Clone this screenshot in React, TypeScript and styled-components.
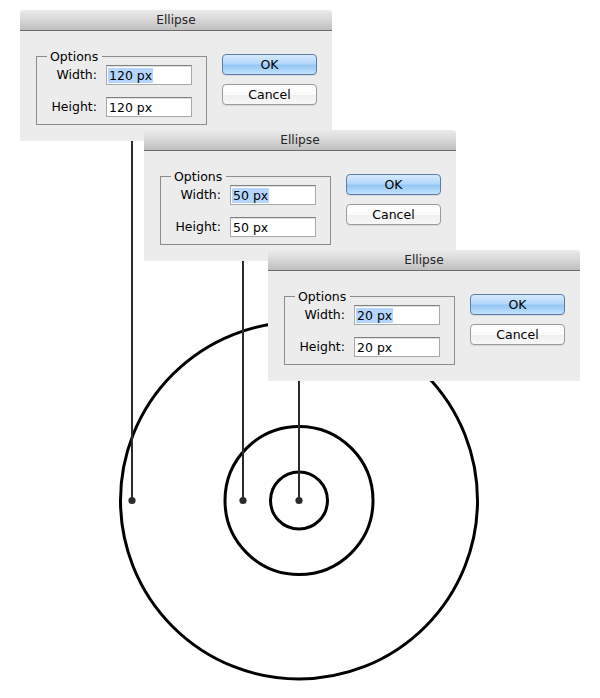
import React from "react";
import styled, { createGlobalStyle } from "styled-components";

const GlobalStyle = createGlobalStyle`
  html, body {
    margin: 0;
    padding: 0;
    background: #ffffff;
  }
  body {
    font-family: "DejaVu Sans", "Liberation Sans", sans-serif;
  }
`;

const Canvas = styled.div`
  position: relative;
  width: 600px;
  height: 698px;
  overflow: hidden;
  background: #ffffff;
`;

const Drawing = styled.svg`
  position: absolute;
  left: 0;
  top: 0;
`;

const Window = styled.div<{ $x: number; $y: number; $z: number }>`
  position: absolute;
  left: ${(p) => p.$x}px;
  top: ${(p) => p.$y}px;
  z-index: ${(p) => p.$z};
  width: 312px;
  display: flex;
  flex-direction: column;
  background: #ececec;
  border-radius: 4px 4px 0 0;
  font-family: "DejaVu Sans", "Liberation Sans", sans-serif;
  font-size: 12.5px;
  color: #000;
`;

const TitleBar = styled.div`
  box-sizing: border-box;
  height: 21px;
  padding-top: 1px;
  border-bottom: 1px solid #6e6e6e;
  border-radius: 4px 4px 0 0;
  background: linear-gradient(to bottom, #ebebeb 0%, #d9d9d9 45%, #bfbfbf 100%);
  display: flex;
  align-items: center;
  justify-content: center;
  font-size: 12.2px;
  color: #262626;
  line-height: 19px;
`;

const Body = styled.div`
  display: flex;
  align-items: flex-start;
  gap: 15px;
  padding: 18px 15px 16px 16px;
`;

const Group = styled.fieldset`
  margin: 0;
  padding: 0;
  width: 169px;
  border: 1px solid #8c8c8c;
  min-inline-size: 0;
`;

const Legend = styled.legend`
  margin-left: 10px;
  padding: 0 4px 0 3px;
  line-height: 15px;
  font-size: 12.5px;
  color: #000;
`;

const Rows = styled.div`
  display: grid;
  grid-template-columns: 46px 86px;
  column-gap: 9px;
  row-gap: 12px;
  align-items: center;
  padding: 1px 0 7px 14px;
`;

const Label = styled.div`
  text-align: right;
  line-height: 20px;
  white-space: nowrap;
`;

const TextField = styled.div`
  box-sizing: border-box;
  height: 20px;
  background: #ffffff;
  border: 1px solid #a9a9a9;
  border-top-color: #7f7f7f;
  box-shadow: inset 0 1px 0 #e2e2e2;
  padding: 1px 0 0 1px;
  display: flex;
  align-items: center;
  white-space: nowrap;
`;

const Value = styled.span<{ $selected?: boolean }>`
  display: inline-block;
  line-height: 15px;
  padding: 0 1px;
  background: ${(p) => (p.$selected ? "#b5d5fe" : "transparent")};
`;

const Buttons = styled.div`
  display: flex;
  flex-direction: column;
  gap: 9px;
  margin-top: 5px;
`;

const Button = styled.div<{ $primary?: boolean }>`
  box-sizing: border-box;
  width: 95px;
  height: 21px;
  border-radius: 4px;
  display: flex;
  align-items: center;
  justify-content: center;
  font-size: 12.5px;
  color: #000;
  border: 1px solid ${(p) => (p.$primary ? "#5a7ea8" : "#9a9a9a")};
  background: ${(p) =>
    p.$primary
      ? "linear-gradient(to bottom, #d6eafd 0%, #b4d8fa 45%, #94c6f4 55%, #c2e2fc 100%)"
      : "linear-gradient(to bottom, #ffffff 0%, #fbfbfb 50%, #f0f0f0 55%, #f7f7f7 100%)"};
  box-shadow: 0 1px 0 rgba(0, 0, 0, 0.08);
`;

type DialogProps = {
  x: number;
  y: number;
  z: number;
  width: string;
  height: string;
};

function EllipseDialog({ x, y, z, width, height }: DialogProps) {
  return (
    <Window $x={x} $y={y} $z={z}>
      <TitleBar>Ellipse</TitleBar>
      <Body>
        <Group>
          <Legend>Options</Legend>
          <Rows>
            <Label>Width:</Label>
            <TextField>
              <Value $selected>{width}</Value>
            </TextField>
            <Label>Height:</Label>
            <TextField>
              <Value>{height}</Value>
            </TextField>
          </Rows>
        </Group>
        <Buttons>
          <Button $primary>OK</Button>
          <Button>Cancel</Button>
        </Buttons>
      </Body>
    </Window>
  );
}

const cx = 299;
const cy = 500.5;

const leaders = [
  { x: 132, from: 141 },
  { x: 243, from: 261 },
  { x: 299, from: 381 },
];

const dialogs = [
  { x: 20, y: 10, width: "120 px", height: "120 px" },
  { x: 144, y: 130, width: "50 px", height: "50 px" },
  { x: 268, y: 250, width: "20 px", height: "20 px" },
];

export default function App() {
  return (
    <>
      <GlobalStyle />
      <Canvas>
        <Drawing width={600} height={698} viewBox="0 0 600 698">
          <circle cx={cx} cy={cy} r={178.5} fill="none" stroke="#000" strokeWidth={3} />
          <circle cx={cx} cy={cy} r={74} fill="none" stroke="#000" strokeWidth={3} />
          <circle cx={cx} cy={cy} r={28.5} fill="none" stroke="#000" strokeWidth={3} />
          {leaders.map((l) => (
            <g key={l.x}>
              <line x1={l.x} y1={l.from} x2={l.x} y2={cy} stroke="#2b2b2b" strokeWidth={2} />
              <circle cx={l.x} cy={cy} r={3.6} fill="#2b2b2b" />
            </g>
          ))}
        </Drawing>
        {dialogs.map((d, i) => (
          <EllipseDialog key={i} x={d.x} y={d.y} z={i + 1} width={d.width} height={d.height} />
        ))}
      </Canvas>
    </>
  );
}
